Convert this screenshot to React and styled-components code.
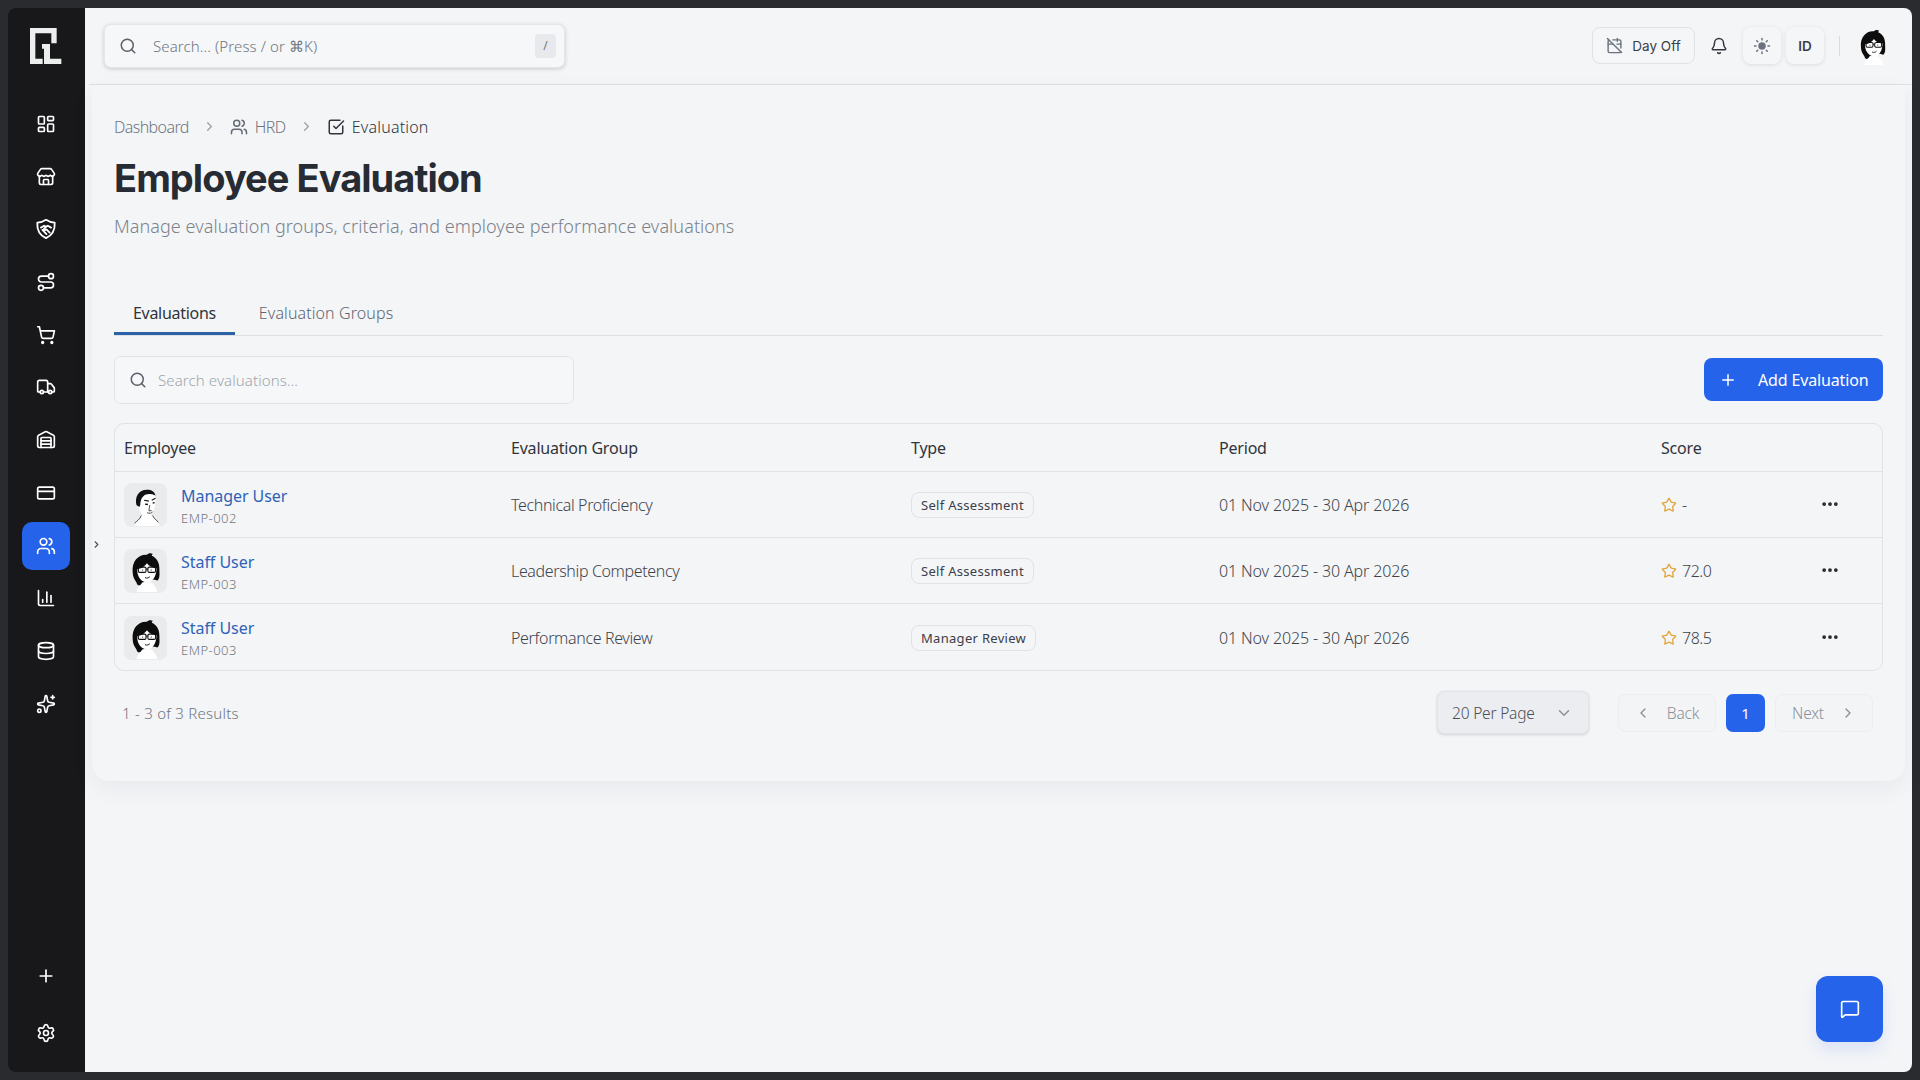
import React from "react";
import styled, { createGlobalStyle } from "styled-components";
import {
  Bell,
  CalendarOff,
  ChartColumn,
  ChevronDown,
  ChevronLeft,
  ChevronRight,
  CreditCard,
  Database,
  Ellipsis,
  LayoutDashboard,
  MessageSquare,
  Plus,
  Route,
  Search,
  Settings,
  ShoppingCart,
  Sparkles,
  SquareCheckBig,
  Star,
  Store,
  Sun,
  Truck,
  Users,
  Warehouse,
} from "lucide-react";

const TEXT_FONT = '"Noto Sans", "Open Sans", "DejaVu Sans", sans-serif';
const UI_FONT = 'Inter, "Noto Sans", sans-serif';

const GlobalStyle = createGlobalStyle`
  * { box-sizing: border-box; }
  html, body { margin: 0; padding: 0; height: 100%; }
  body {
    background: #2a2b2e;
    font-family: ${TEXT_FONT};
    color: #30343b;
  }
`;

const ShieldDeal = () => (
  <svg width="22" height="22" viewBox="0 0 24 24" fill="none" stroke="currentColor" strokeWidth="2" strokeLinecap="round" strokeLinejoin="round">
    <path d="M2.500 5c3.500 0 6.500-1 9.500-3 3 2 6 3 9.500 3 .5 8.500-3 14-9.500 17C5.500 19 2 13.500 2.500 5z" />
    <path d="M6.500 10.500l3.500-2 2 1 2-1 3.500 2" />
    <path d="M12 9.500l-2.500 3c1 1 2.200.8 3 0l3.500 3.500" />
    <path d="M8 13l4.500 4.500" />
  </svg>
);

const LogoMark = () => (
  <svg width="44" height="48" viewBox="0 0 132 144" fill="#eceded">
    <path d="M24 18H104V64H88V34H40V110H62V126H24Z" />
    <path d="M60 66H84V110H118V126H66V80H60Z" />
  </svg>
);

const ManagerFace = ({ size }) => (
  <svg width={size} height={size} viewBox="0 0 44 44">
    <path d="M10 44c1-6 6-7 8-11h10c2 4 6 5 8 11z" fill="#fff" />
    <path d="M17 33c-1 4-5 6-7 8M29 33c1 3 4 5 6 7" stroke="#222" strokeWidth=".8" fill="none" />
    <path d="M13 16c0-6 5-9 10-9s9 3 9 10c0 8-3 17-9 17-6 0-10-8-10-18z" fill="#fff" />
    <path d="M12 22c-2-8 2-16 11-16 5 0 8 2 9 6-5-2-10-2-13 1-2 2-3 5-3 9l-1 2z" fill="#111" />
    <path d="M20 17l5 1M28 17l4-2" stroke="#111" strokeWidth="1.200" />
    <path d="M21 21l3 .5M29 20l2-.5" stroke="#111" strokeWidth="1.400" />
    <path d="M26 22l-1 6h3M23 30c2 1 5 1 6-1" stroke="#333" strokeWidth=".9" fill="none" />
  </svg>
);

const StaffFace = ({ size }) => (
  <svg width={size} height={size} viewBox="0 0 44 44">
    <path d="M12 44c1-5 4-7 6-10h10c2 3 5 5 6 10z" fill="#fff" />
    <path d="M8 23C7 11 15 4 23 5c2-2 4-2 6-1l-1 2c5 2 8 7 8 13 0 6 1 10-2 13l-4-1-12 3c-2 4-5 4-6 0-2-3-4-6-4-11z" fill="#0d0d0d" />
    <path d="M13 20c4 0 8-3 10-6 2 3 6 5 10 5 0 8-4 15-10 15-6 0-11-7-10-14z" fill="#fff" />
    <rect x="14" y="18" width="8" height="5.500" rx="1.500" fill="none" stroke="#111" strokeWidth="1.200" />
    <rect x="24" y="18" width="8" height="5.500" rx="1.500" fill="none" stroke="#111" strokeWidth="1.200" />
    <path d="M22 20h2M18 21h1M27 21h1M21 29c2 1 4 0 5-1" stroke="#111" strokeWidth="1" fill="none" />
  </svg>
);

const navIcons = [LayoutDashboard, Store, ShieldDeal, Route, ShoppingCart, Truck, Warehouse, CreditCard, Users, ChartColumn, Database, Sparkles];

const evaluations = [
  { id: 1, name: "Manager User", code: "EMP-002", face: ManagerFace, group: "Technical Proficiency", type: "Self Assessment", score: "-" },
  { id: 2, name: "Staff User", code: "EMP-003", face: StaffFace, group: "Leadership Competency", type: "Self Assessment", score: "72.0" },
  { id: 3, name: "Staff User", code: "EMP-003", face: StaffFace, group: "Performance Review", type: "Manager Review", score: "78.5" },
];

const App = () => (
  <>
    <GlobalStyle />
    <Frame>
      <Sidebar>
        <LogoSlot>
          <LogoMark />
        </LogoSlot>
        <NavList>
          {navIcons.map((Icon, i) => (
            <NavItem key={i} $active={i === 8}>
              <Icon size={20} strokeWidth={2} />
            </NavItem>
          ))}
        </NavList>
        <SidebarFoot>
          <NavItem>
            <Plus size={20} />
          </NavItem>
          <NavItem>
            <Settings size={20} />
          </NavItem>
        </SidebarFoot>
      </Sidebar>

      <Main>
        <TopBar>
          <GlobalSearch>
            <Search size={18} color="#5b6169" />
            <GlobalInput placeholder="Search... (Press / or ⌘K)" />
            <Kbd>/</Kbd>
          </GlobalSearch>
          <TopActions>
            <DayOff>
              <CalendarOff size={17} color="#6b7280" />
              Day Off
            </DayOff>
            <BellSlot>
              <Bell size={18} color="#33383f" />
            </BellSlot>
            <SoftButton>
              <Sun size={18} color="#6b7280" fill="#6b7280" />
            </SoftButton>
            <SoftButton>ID</SoftButton>
            <Divider />
            <StaffFace size={38} />
          </TopActions>
        </TopBar>

        <Card>
          <Breadcrumb>
            <Crumb $spacing="-0.6px">Dashboard</Crumb>
            <ChevronRight size={15} color="#9aa1aa" />
            <Crumb>
              <Users size={18} />
              HRD
            </Crumb>
            <ChevronRight size={15} color="#9aa1aa" />
            <Crumb $current $spacing="0.2px">
              <SquareCheckBig size={18} />
              Evaluation
            </Crumb>
          </Breadcrumb>
          <Title>Employee Evaluation</Title>
          <Subtitle>Manage evaluation groups, criteria, and employee performance evaluations</Subtitle>

          <Tabs>
            <Tab $active>Evaluations</Tab>
            <Tab>Evaluation Groups</Tab>
          </Tabs>

          <Toolbar>
            <TableSearch>
              <Search size={18} color="#5b6169" />
              <TableInput placeholder="Search evaluations..." />
            </TableSearch>
            <AddButton>
              <Plus size={18} />
              Add Evaluation
            </AddButton>
          </Toolbar>

          <TableWrap>
            <HeadRow>
              <span>Employee</span>
              <span>Evaluation Group</span>
              <span>Type</span>
              <span>Period</span>
              <span>Score</span>
              <span />
            </HeadRow>
            {evaluations.map((row) => (
              <Row key={row.id}>
                <Employee>
                  <AvatarTile>
                    <row.face size={42} />
                  </AvatarTile>
                  <EmployeeText>
                    <Name>{row.name}</Name>
                    <Code>{row.code}</Code>
                  </EmployeeText>
                </Employee>
                <GroupCell>{row.group}</GroupCell>
                <span>
                  <Badge>{row.type}</Badge>
                </span>
                <PeriodCell>01 Nov 2025 - 30 Apr 2026</PeriodCell>
                <Score>
                  <Star size={16} color="#e2a63b" strokeWidth={2} />
                  {row.score}
                </Score>
                <MenuCell>
                  <Ellipsis size={20} color="#23262b" strokeWidth={2.500} />
                </MenuCell>
              </Row>
            ))}
          </TableWrap>

          <Pagination>
            <Results>1 - 3 of 3 Results</Results>
            <PageControls>
              <PerPage>
                20 Per Page
                <ChevronDown size={18} color="#8b919a" />
              </PerPage>
              <Pager>
                <PageButton>
                  <ChevronLeft size={16} />
                  Back
                </PageButton>
                <PageNumber>1</PageNumber>
                <PageButton>
                  Next
                  <ChevronRight size={16} />
                </PageButton>
              </Pager>
            </PageControls>
          </Pagination>
        </Card>

        <CollapseToggle>
          <ChevronRight size={11} color="#4b5058" strokeWidth={2.500} />
        </CollapseToggle>
        <ChatButton>
          <MessageSquare size={20} />
        </ChatButton>
      </Main>
    </Frame>
  </>
);

export default App;

const Frame = styled.div`
  display: flex;
  height: 100vh;
  padding: 8px;
  background: #2a2b2e;
`;

const Sidebar = styled.aside`
  width: 77px;
  flex: none;
  display: flex;
  flex-direction: column;
  align-items: center;
  padding: 14px 1px 15px 0;
  background: #18181a;
  border-radius: 8px 0 0 8px;
`;

const LogoSlot = styled.div`
  height: 48px;
  margin-bottom: 30px;
  margin-left: -4px;
`;

const NavList = styled.nav`
  display: flex;
  flex-direction: column;
  gap: 4.7px;
`;

const NavItem = styled.div`
  width: 48px;
  height: 48px;
  display: flex;
  align-items: center;
  justify-content: center;
  border-radius: 10px;
  color: #fff;
  background: ${(p) => (p.$active ? "#2563eb" : "transparent")};
`;

const SidebarFoot = styled.div`
  margin-top: auto;
  display: flex;
  flex-direction: column;
  gap: 9px;
`;

const Main = styled.main`
  position: relative;
  flex: 1;
  min-width: 0;
  background: #f4f5f7;
  border-radius: 0 8px 8px 0;
`;

const TopBar = styled.header`
  height: 77px;
  display: flex;
  align-items: center;
  justify-content: space-between;
  margin-left: 4px;
  padding: 0 20px 1px 15px;
  border-bottom: 1px solid #dcdfe3;
`;

const GlobalSearch = styled.div`
  width: 461px;
  height: 44px;
  display: flex;
  align-items: center;
  gap: 14px;
  padding: 0 8px 0 14px;
  background: #f6f7f8;
  border: 1px solid #e4e6e9;
  border-radius: 7px;
  box-shadow: 0 1px 4px rgba(0, 0, 0, 0.18);
`;

const GlobalInput = styled.input`
  flex: 1;
  min-width: 0;
  border: 0;
  outline: 0;
  background: none;
  font: 300 15px ${TEXT_FONT};
  letter-spacing: 0.1px;
  &::placeholder { color: #6f7680; opacity: 1; }
`;

const Kbd = styled.span`
  width: 21px;
  height: 24px;
  display: flex;
  align-items: center;
  justify-content: center;
  background: #e7e9ec;
  border-radius: 4px;
  color: #6f7680;
  font-size: 12px;
`;

const TopActions = styled.div`
  display: flex;
  align-items: center;
`;

const DayOff = styled.button`
  width: 103px;
  height: 37px;
  display: flex;
  align-items: center;
  justify-content: center;
  gap: 9px;
  padding: 0;
  background: #f5f6f8;
  border: 1px solid #dfe2e6;
  border-radius: 8px;
  color: #3b4048;
  font: 400 13.500px ${UI_FONT};
`;

const BellSlot = styled.div`
  width: 48px;
  display: flex;
  justify-content: center;
`;

const SoftButton = styled.button`
  width: 38px;
  height: 37px;
  margin-right: 5px;
  display: flex;
  align-items: center;
  justify-content: center;
  padding: 0;
  background: #f5f6f8;
  border: 0;
  border-radius: 8px;
  box-shadow: 0 1px 4px rgba(0, 0, 0, 0.1);
  color: #3b4048;
  font: 600 13.500px ${UI_FONT};
`;

const Divider = styled.span`
  width: 1px;
  height: 20px;
  margin: 0 14px 0 10px;
  background: #d8dbdf;
`;

const Card = styled.section`
  height: 696px;
  margin: 0 7px;
  padding: 0 22px;
  border-radius: 0 0 18px 18px;
  background: #f4f5f7;
  box-shadow: 0 8px 24px rgba(20, 24, 32, 0.05);
`;

const Breadcrumb = styled.nav`
  display: flex;
  align-items: center;
  gap: 13px;
  padding-top: 29px;
  height: 54px;
  font-size: 16px;
  font-weight: 300;
  letter-spacing: -0.55px;
`;

const Crumb = styled.span`
  display: flex;
  align-items: center;
  gap: 7px;
  letter-spacing: ${(p) => p.$spacing || "inherit"};
  color: ${(p) => (p.$current ? "#30343b" : "#6f7680")};
  svg { color: ${(p) => (p.$current ? "#30343b" : "#636a74")}; }
`;

const Title = styled.h1`
  margin: 16px 0 0;
  font: 700 38px/46px ${UI_FONT};
  letter-spacing: -0.95px;
  color: #272b33;
`;

const Subtitle = styled.p`
  margin: 13px 0 0;
  font-size: 18px;
  font-weight: 300;
  line-height: 24px;
  letter-spacing: 0.07px;
  color: #7b828c;
`;

const Tabs = styled.div`
  display: flex;
  gap: 5px;
  height: 57px;
  margin-top: 41px;
  padding-top: 22px;
  border-bottom: 1px solid #dcdfe3;
`;

const Tab = styled.div`
  height: 34px;
  padding: 0 19px;
  font-size: 16px;
  font-weight: ${(p) => (p.$active ? 400 : 300)};
  line-height: 24px;
  letter-spacing: ${(p) => (p.$active ? "-0.3px" : "0.1px")};
  color: ${(p) => (p.$active ? "#30343b" : "#5f6670")};
  border-bottom: 3px solid ${(p) => (p.$active ? "#2b62a8" : "transparent")};
`;

const Toolbar = styled.div`
  display: flex;
  align-items: center;
  justify-content: space-between;
  margin-top: 20px;
`;

const TableSearch = styled.div`
  width: 460px;
  height: 48px;
  display: flex;
  align-items: center;
  gap: 9px;
  padding: 0 14px;
  border: 1px solid #dfe2e6;
  border-radius: 7px;
  background: #f6f7f8;
`;

const TableInput = styled.input`
  flex: 1;
  min-width: 0;
  border: 0;
  outline: 0;
  background: none;
  font: 300 15px ${TEXT_FONT};
  letter-spacing: 0.1px;
  &::placeholder { color: #a0a6ae; opacity: 1; }
`;

const AddButton = styled.button`
  width: 179px;
  height: 43px;
  margin-top: -1px;
  display: flex;
  align-items: center;
  gap: 21px;
  padding: 0 0 0 15px;
  border: 0;
  border-radius: 8px;
  background: #2563eb;
  color: #fff;
  font: 400 16px ${TEXT_FONT};
  letter-spacing: -0.15px;
`;

const TableWrap = styled.div`
  margin-top: 19px;
  border: 1px solid #dfe2e6;
  border-radius: 10px;
  font-size: 16px;
`;

const columns = "387px 400px 308px 442px 1fr 104px";

const HeadRow = styled.div`
  display: grid;
  grid-template-columns: ${columns};
  align-items: center;
  height: 48px;
  letter-spacing: -0.2px;
  color: #30343b;
  border-bottom: 1px solid #dfe2e6;
  > span { padding-left: 9px; }
`;

const Row = styled.div`
  display: grid;
  grid-template-columns: ${columns};
  align-items: center;
  height: 66px;
  padding-top: 1px;
  font-weight: 300;
  color: #3f444c;
  border-bottom: 1px solid #dfe2e6;
  &:last-child { border-bottom: 0; }
  > span { padding-left: 9px; }
`;

const GroupCell = styled.span`
  letter-spacing: -0.36px;
`;

const PeriodCell = styled.span`
  letter-spacing: -0.14px;
`;

const Employee = styled.div`
  display: flex;
  align-items: center;
  gap: 14px;
  padding-left: 9px;
`;

const EmployeeText = styled.div`
  padding-top: 1px;
`;

const AvatarTile = styled.div`
  width: 43px;
  height: 44px;
  display: flex;
  align-items: center;
  justify-content: center;
  border-radius: 8px;
  background: #e9ebed;
  overflow: hidden;
`;

const Name = styled.div`
  font-weight: 400;
  line-height: 22px;
  letter-spacing: -0.05px;
  color: #2f62b5;
`;

const Code = styled.div`
  margin-top: 2px;
  font-size: 13px;
  line-height: 18px;
  letter-spacing: 0.45px;
  color: #6f757d;
`;

const Badge = styled.span`
  display: inline-block;
  height: 26px;
  padding: 0 9px;
  border: 1px solid #dfe2e6;
  border-radius: 8px;
  font-size: 13px;
  font-weight: 400;
  line-height: 24px;
  letter-spacing: 0.3px;
  color: #3b4048;
`;

const Score = styled.div`
  display: flex;
  align-items: center;
  gap: 5px;
  padding-left: 9px;
  font-size: 16px;
  letter-spacing: -0.45px;
`;

const MenuCell = styled.div`
  display: flex;
  justify-content: center;
  margin-top: -2px;
`;

const Pagination = styled.div`
  display: flex;
  align-items: center;
  justify-content: space-between;
  height: 43px;
  margin-top: 20px;
  padding-left: 8px;
  padding-right: 10px;
`;

const Results = styled.div`
  font-size: 15px;
  font-weight: 300;
  letter-spacing: 0.25px;
  color: #6f7680;
`;

const PageControls = styled.div`
  display: flex;
  align-items: center;
  gap: 29px;
`;

const PerPage = styled.button`
  width: 152px;
  height: 43px;
  display: flex;
  align-items: center;
  justify-content: space-between;
  padding: 0 15px 0 14px;
  background: #ebedf0;
  border: 1px solid #e1e3e7;
  border-radius: 7px;
  box-shadow: 0 1px 3px rgba(0, 0, 0, 0.14);
  color: #4a4f57;
  font: 300 15.500px ${TEXT_FONT};
  letter-spacing: -0.2px;
`;

const Pager = styled.div`
  display: flex;
  align-items: center;
  gap: 10px;
`;

const PageButton = styled.button`
  width: 98px;
  height: 38px;
  display: flex;
  align-items: center;
  justify-content: center;
  gap: 16px;
  padding: 0;
  background: #f3f4f6;
  border: 1px solid #ebedf0;
  border-radius: 7px;
  color: #8a9099;
  font: 300 15.500px ${TEXT_FONT};
  letter-spacing: -0.2px;
`;

const PageNumber = styled.div`
  width: 39px;
  height: 38px;
  display: flex;
  align-items: center;
  justify-content: center;
  border-radius: 7px;
  background: #2563eb;
  color: #fff;
  font-size: 15px;
`;

const CollapseToggle = styled.div`
  position: absolute;
  left: 6px;
  top: 531px;
  display: flex;
`;

const ChatButton = styled.button`
  position: absolute;
  right: 29px;
  bottom: 30px;
  width: 67px;
  height: 66px;
  display: flex;
  align-items: center;
  justify-content: center;
  padding: 0;
  border: 0;
  border-radius: 12px;
  background: #2563eb;
  color: #fff;
  box-shadow: 0 8px 16px rgba(37, 99, 235, 0.12);
`;
